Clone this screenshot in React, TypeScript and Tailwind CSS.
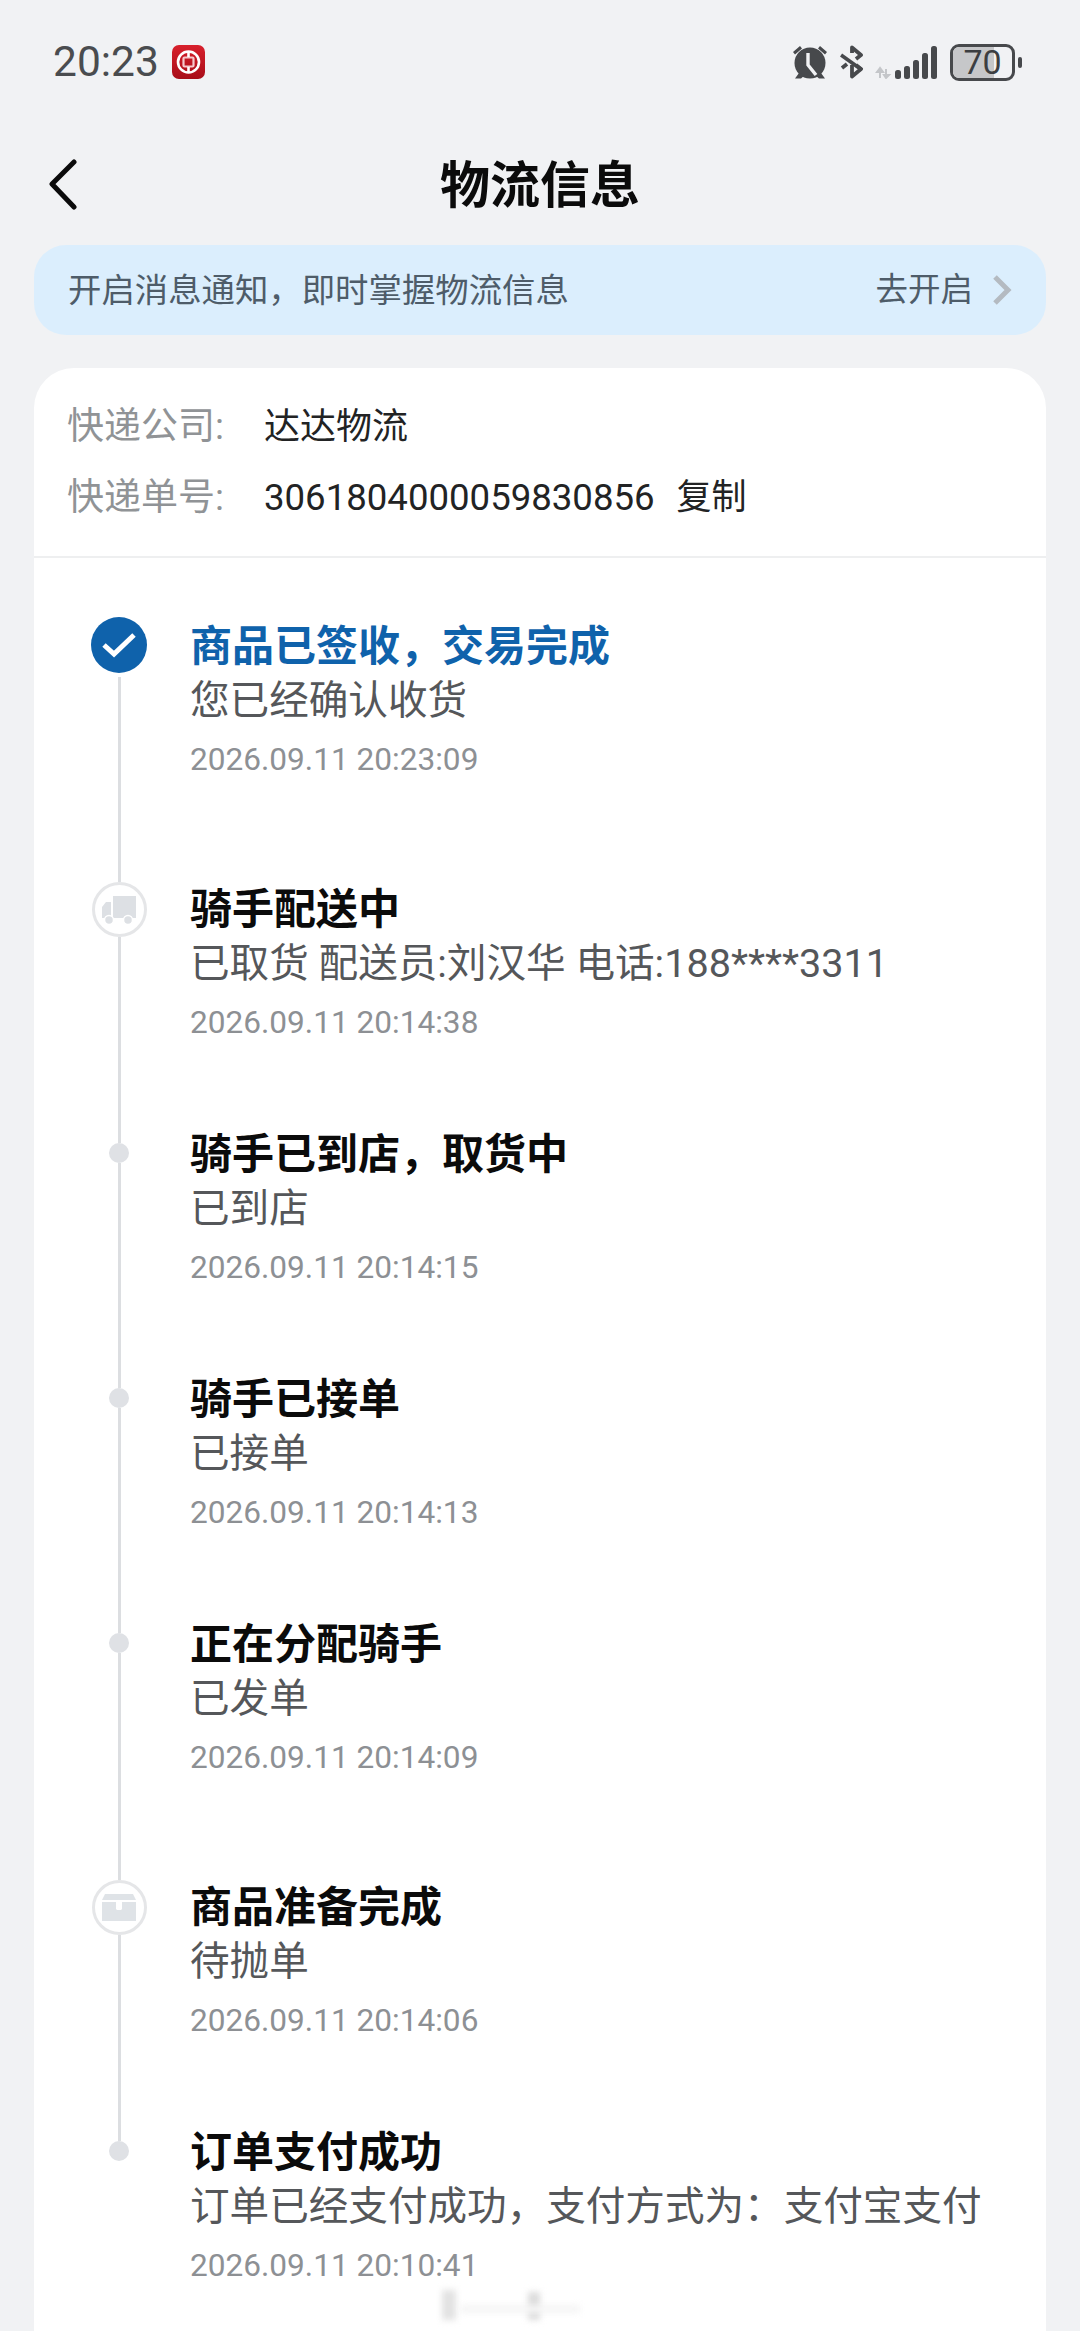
import React from "react";

const FONT = 'Roboto, "Noto Sans CJK SC", sans-serif';

function BankLogo() {
  return (
    <svg width="33" height="34" viewBox="0 0 33 34">
      <defs>
        <linearGradient id="bank" x1="0" y1="0" x2="0" y2="1">
          <stop offset="0" stopColor="#d8202c" />
          <stop offset="1" stopColor="#a80d18" />
        </linearGradient>
      </defs>
      <rect width="33" height="34" rx="7" fill="url(#bank)" />
      <circle cx="16.5" cy="17" r="10.5" fill="none" stroke="#fff" strokeWidth="2.6" />
      <rect x="11.5" y="12.5" width="10" height="9" rx="1" fill="none" stroke="#f6c9cc" strokeWidth="2.2" />
      <path d="M16.5 6v6M16.5 22v6" stroke="#fff" strokeWidth="2.6" />
    </svg>
  );
}

function Alarm() {
  return (
    <svg width="36" height="34" viewBox="0 0 36 34" fill="#47494c">
      <circle cx="18" cy="18" r="15.5" />
      <path d="M1 7 L8 1 L10 3.5 L3 9.5 Z M35 7 L28 1 L26 3.5 L33 9.5 Z" />
      <path d="M7 28 L3 33.5 H9 L13 30 Z M29 28 L33 33.5 H27 L23 30 Z" />
      <path d="M16 8 V20 L24 30" fill="none" stroke="#f1f2f4" strokeWidth="3.4" />
    </svg>
  );
}

function Bluetooth() {
  return (
    <svg width="24" height="34" viewBox="0 0 24 34" fill="none" stroke="#47494c" strokeWidth="3.8">
      <path d="M1 10 L22 25" />
      <path d="M12 8 V2.5 L21 10 L16 14 M16 20 L21 24 L12 31.5 V20" strokeLinejoin="round" />
      <path d="M2 23 L7 19" />
    </svg>
  );
}

function Signal() {
  return (
    <svg width="62" height="34" viewBox="0 0 62 34">
      <path d="M5 33V24M5 23l-3 4h6zM11 24v9M11 33l-2-3h5z" stroke="#c4c6c9" strokeWidth="2" fill="#c4c6c9" />
      <rect x="20" y="25" width="6" height="9" rx="2.5" fill="#47494c" />
      <rect x="29" y="21" width="6" height="13" rx="2.5" fill="#47494c" />
      <rect x="38" y="15" width="6" height="19" rx="2.5" fill="#47494c" />
      <rect x="47" y="8" width="6" height="26" rx="2.5" fill="#47494c" />
      <rect x="56" y="1" width="6" height="33" rx="2.5" fill="#47494c" />
    </svg>
  );
}

function Battery() {
  return (
    <div className="flex items-center gap-[3px]">
      <div className="relative w-[65px] h-[37px] rounded-[9px] border-[3px] border-[#47494c] flex items-center justify-center">
        <div className="absolute left-0 top-0 bottom-0 w-[41px] rounded-l-[6px] bg-[#c6c7c9]" />
        <span className="relative text-[34px] h-[31px] leading-[31px] text-[#3c3e41]">70</span>
      </div>
      <div className="w-[4px] h-[11px] rounded-full bg-[#47494c]" />
    </div>
  );
}

function CheckIcon() {
  return (
    <div className="w-[56px] h-[56px] rounded-full bg-[#0f62ab] flex items-center justify-center shrink-0 -mt-[3px]">
      <svg width="36" height="28" viewBox="0 0 36 28" fill="none" stroke="#fff" strokeWidth="5">
        <path d="M3 14 L13 23 L33 4" />
      </svg>
    </div>
  );
}

function Truck() {
  return (
    <svg width="36" height="30" viewBox="0 0 36 30" fill="#dde0e4">
      <rect x="12" y="1" width="23" height="22" />
      <path d="M1 12 L5 7 H10 V23 H1 Z" />
      <circle cx="8" cy="25" r="4.5" stroke="#fff" strokeWidth="1.5" />
      <circle cx="27" cy="25" r="4.5" stroke="#fff" strokeWidth="1.5" />
    </svg>
  );
}

function Box() {
  return (
    <svg width="36" height="30" viewBox="0 0 36 30" fill="#dfe3e7">
      <path d="M4 1 H32 L35 7 H1 Z" />
      <path d="M1 9 H15 V16 L16 17 H20 L21 16 V9 H35 V28 H1 Z" />
    </svg>
  );
}

function Ring({ children }: { children: React.ReactNode }) {
  return (
    <div className="w-[55px] h-[55px] rounded-full border-[3px] border-[#e5e6e8] bg-white flex items-center justify-center shrink-0">
      {children}
    </div>
  );
}

type Item = {
  title: string;
  sub: string;
  time: string;
  kind: "check" | "truck" | "dot" | "box";
  last?: boolean;
};

const items: Item[] = [
  { title: "商品已签收，交易完成", sub: "您已经确认收货", time: "2026.09.11 20:23:09", kind: "check" },
  { title: "骑手配送中", sub: "已取货 配送员:刘汉华 电话:188****3311", time: "2026.09.11 20:14:38", kind: "truck" },
  { title: "骑手已到店，取货中", sub: "已到店", time: "2026.09.11 20:14:15", kind: "dot" },
  { title: "骑手已接单", sub: "已接单", time: "2026.09.11 20:14:13", kind: "dot" },
  { title: "正在分配骑手", sub: "已发单", time: "2026.09.11 20:14:09", kind: "dot" },
  { title: "商品准备完成", sub: "待抛单", time: "2026.09.11 20:14:06", kind: "box" },
  { title: "订单支付成功", sub: "订单已经支付成功，支付方式为：支付宝支付", time: "2026.09.11 20:10:41", kind: "dot", last: true },
];

function Row({ item }: { item: Item }) {
  const big = item.kind === "truck" || item.kind === "box";
  return (
    <div className="flex">
      <div className="w-[56px] ml-[57px] mr-[43px] shrink-0 flex flex-col items-center">
        {item.kind === "check" && <CheckIcon />}
        {big && <div className="w-[3px] h-[17px] bg-[#dcdee1]" />}
        {item.kind === "truck" && <Ring><Truck /></Ring>}
        {item.kind === "box" && <Ring><Box /></Ring>}
        {item.kind === "dot" && (
          <>
            <div className="w-[3px] h-[15px] bg-[#dcdee1]" />
            <div className="w-[20px] h-[20px] rounded-full bg-[#dfe1e5] shrink-0" />
          </>
        )}
        {!item.last && (
          <div className={`w-[3px] flex-1 bg-[#dcdee1] ${item.kind === "check" ? "mt-[4px]" : ""}`} />
        )}
      </div>
      <div className={big ? "pt-[18px] pb-[80px]" : "pb-[80px]"}>
        <div className={`h-[54px] leading-[54px] text-[42px] font-bold whitespace-nowrap ${item.kind === "check" ? "text-[#0f62ab]" : "text-[#0b0b0b]"}`}>
          {item.title}
        </div>
        <div className="h-[54px] leading-[54px] text-[39.6px] text-[#55575a] whitespace-nowrap">{item.sub}</div>
        <div className="mt-[7px] h-[50px] leading-[50px] text-[31.6px] text-[#8d9094] whitespace-nowrap">{item.time}</div>
      </div>
    </div>
  );
}

export default function App() {
  return (
    <div
      className="relative w-[1080px] h-[2331px] overflow-hidden bg-[#f1f2f4] flex flex-col"
      style={{ fontFamily: FONT }}
    >
      <div className="h-[124px] shrink-0 pl-[53px] pr-[58px] flex items-center justify-between">
        <div className="flex items-center gap-[13px]">
          <span className="text-[42.5px] leading-none text-[#4a4c4f]">20:23</span>
          <BankLogo />
        </div>
        <div className="flex items-center">
          <Alarm />
          <div className="ml-[12px]"><Bluetooth /></div>
          <div className="ml-[11px]"><Signal /></div>
          <div className="ml-[13px]"><Battery /></div>
        </div>
      </div>

      <div className="relative h-[121px] shrink-0 flex items-center justify-center pt-[2px]">
        <svg className="absolute left-[48px] top-[35px]" width="30" height="52" viewBox="0 0 30 52" fill="none" stroke="#0b0b0b" strokeWidth="5" strokeLinecap="round" strokeLinejoin="round">
          <path d="M26 3 L4 25 L26 48" />
        </svg>
        <span className="text-[50px] font-bold text-[#0b0b0b] leading-none">物流信息</span>
      </div>

      <div className="mx-[34px] h-[90px] shrink-0 rounded-[32px] bg-[#dbeefd] pl-[34px] pr-[34px] flex items-center justify-between text-[#4e5c69]">
        <span className="text-[33.4px] leading-none pt-[2px]">开启消息通知，即时掌握物流信息</span>
        <div className="flex items-center gap-[19px]">
          <span className="text-[32.5px] leading-none">去开启</span>
          <svg width="20" height="32" viewBox="0 0 20 32" fill="none" stroke="#b4bac1" strokeWidth="5">
            <path d="M3 3 L16 16 L3 29" />
          </svg>
        </div>
      </div>

      <div className="mx-[34px] mt-[33px] flex-1 min-h-0 rounded-t-[40px] bg-white overflow-hidden">
        <div className="h-[190px] border-b-2 border-[#eeeff0] pt-[35px] pl-[33px] text-[36px] flex flex-col gap-[23px]">
          <div className="flex h-[48px] items-center">
            <span className="w-[197px] text-[37px] text-[#909396]">快递公司:</span>
            <span className="text-[#222324]">达达物流</span>
          </div>
          <div className="flex h-[48px] items-center">
            <span className="w-[197px] text-[37px] text-[#909396]">快递单号:</span>
            <span className="text-[36.6px] text-[#222324]">3061804000059830856</span>
            <span className="ml-[22px] text-[35px] text-[#222324]">复制</span>
          </div>
        </div>
        <div className="pt-[62px] flex flex-col">
          {items.map((item) => (
            <Row key={item.title} item={item} />
          ))}
        </div>
      </div>

      <div className="absolute left-[442px] top-[2290px] w-[14px] h-[30px] bg-[#e2e2e2] blur-[3px]" />
      <div className="absolute left-[528px] top-[2292px] w-[12px] h-[28px] bg-[#dcdcdc] blur-[3px]" />
      <div className="absolute left-[460px] top-[2305px] w-[120px] h-[8px] bg-[#f5f5f5] blur-[3px]" />
    </div>
  );
}
